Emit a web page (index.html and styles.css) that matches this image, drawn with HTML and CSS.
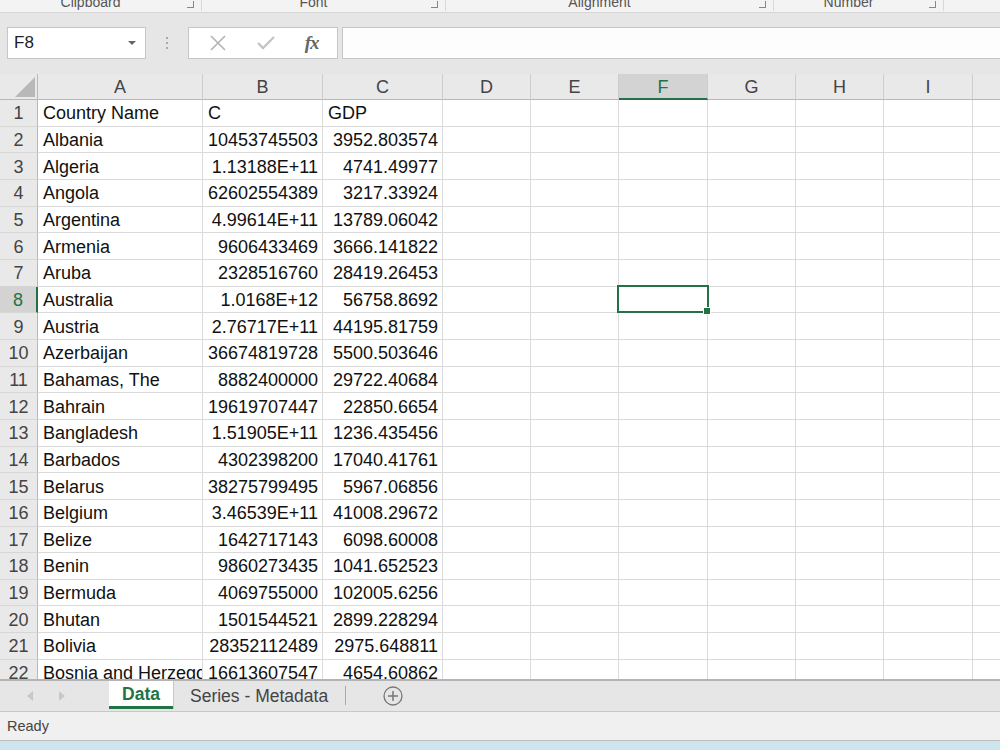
FILE: index.html
```html
<!DOCTYPE html>
<html lang="en">
  <head>
    <meta charset="UTF-8" />
    <title>Book1 - Excel</title>
    <link rel="stylesheet" href="styles.css">
  </head>
  <body>
    <div class="app">
      <!-- ribbon group labels (cut off at top) -->
      <div class="ribbon">
        <div class="group g-clip"><span class="label">Clipboard</span><span class="launch"></span></div>
        <div class="group g-font"><span class="label">Font</span><span class="launch"></span></div>
        <div class="group g-align"><span class="label">Alignment</span><span class="launch"></span></div>
        <div class="group g-num"><span class="label">Number</span><span class="launch"></span></div>
        <div class="group g-rest"></div>
      </div>

      <!-- formula bar -->
      <div class="formulabar">
        <div class="namebox">
          <span>F8</span>
          <svg width="8" height="5" viewBox="0 0 8 5"><path d="M0 0h8L4 4z" fill="#666"/></svg>
        </div>
        <div class="grip">
          <i></i><i></i><i></i>
        </div>
        <div class="fxbtns">
          <svg width="18" height="18" viewBox="0 0 18 18"><path d="M2 2l14 14M16 2L2 16" stroke="#b4b4b4" stroke-width="1.6" fill="none"/></svg>
          <svg width="20" height="18" viewBox="0 0 20 18"><path d="M2 9l5 5L18 3" stroke="#c4c4c4" stroke-width="2.4" fill="none"/></svg>
          <span class="fx">fx</span>
        </div>
        <div class="input"></div>
      </div>

      <!-- sheet grid -->
      <div class="sheet" id="sheet"></div>

      <!-- sheet tabs -->
      <div class="tabs">
        <div class="nav">
          <svg width="8" height="10" viewBox="0 0 8 10"><path d="M6 0v10L0 5z" fill="#c8c8c8"/></svg>
          <svg width="8" height="10" viewBox="0 0 8 10"><path d="M2 0v10l6-5z" fill="#c8c8c8"/></svg>
        </div>
        <div class="tab active">Data</div>
        <div class="tab">Series - Metadata</div>
        <div class="tabsep"></div>
        <div class="addsheet">
          <svg width="20" height="20" viewBox="0 0 20 20"><circle cx="10" cy="10" r="9" stroke="#777" stroke-width="1.3" fill="none"/><path d="M10 5v10M5 10h10" stroke="#777" stroke-width="1.5"/></svg>
        </div>
      </div>

      <div class="status">Ready</div>
      <div class="taskbar"></div>
    </div>

    <script>
      const kolonner = ["A", "B", "C", "D", "E", "F", "G", "H", "I", "J"];
      const data = [
        ["Country Name", "C", "GDP"],
        ["Albania", "10453745503", "3952.803574"],
        ["Algeria", "1.13188E+11", "4741.49977"],
        ["Angola", "62602554389", "3217.33924"],
        ["Argentina", "4.99614E+11", "13789.06042"],
        ["Armenia", "9606433469", "3666.141822"],
        ["Aruba", "2328516760", "28419.26453"],
        ["Australia", "1.0168E+12", "56758.8692"],
        ["Austria", "2.76717E+11", "44195.81759"],
        ["Azerbaijan", "36674819728", "5500.503646"],
        ["Bahamas, The", "8882400000", "29722.40684"],
        ["Bahrain", "19619707447", "22850.6654"],
        ["Bangladesh", "1.51905E+11", "1236.435456"],
        ["Barbados", "4302398200", "17040.41761"],
        ["Belarus", "38275799495", "5967.06856"],
        ["Belgium", "3.46539E+11", "41008.29672"],
        ["Belize", "1642717143", "6098.60008"],
        ["Benin", "9860273435", "1041.652523"],
        ["Bermuda", "4069755000", "102005.6256"],
        ["Bhutan", "1501544521", "2899.228294"],
        ["Bolivia", "28352112489", "2975.648811"],
        ["Bosnia and Herzegovina", "16613607547", "4654.60862"],
        ["", "", ""],
      ];

      const sheet = document.querySelector("#sheet");

      // header row
      const hjoerne = document.createElement("div");
      hjoerne.className = "hd corner";
      hjoerne.innerHTML =
        '<svg width="20" height="20" viewBox="0 0 20 20"><path d="M20 0v20H0z" fill="#b8b8b8"/></svg>';
      sheet.appendChild(hjoerne);
      kolonner.forEach((k) => {
        const h = document.createElement("div");
        h.className = "hd col" + (k == "F" ? " sel" : "");
        h.textContent = k;
        sheet.appendChild(h);
      });

      // rows
      data.forEach((raekke, i) => {
        const nr = i + 1;
        const rh = document.createElement("div");
        rh.className = "hd row" + (nr == 8 ? " sel" : "");
        rh.textContent = nr;
        sheet.appendChild(rh);
        kolonner.forEach((k, j) => {
          const c = document.createElement("div");
          c.className = "cell";
          const v = raekke[j] || "";
          if (v != "" && nr > 1 && j > 0) c.classList.add("num");
          if (k == "F" && nr == 8) c.classList.add("active");
          c.textContent = v;
          sheet.appendChild(c);
        });
      });
    </script>
  </body>
</html>
```

FILE: styles.css
```css
* {
  margin: 0;
  padding: 0;
  box-sizing: border-box;
}

body {
  width: 1000px;
  height: 750px;
  overflow: hidden;
  background: #e6e6e6;
  font-family: "Liberation Sans", Arial, sans-serif;
}

.app {
  display: flex;
  flex-direction: column;
  height: 750px;
}

/* ribbon labels */

.ribbon {
  display: flex;
  height: 13px;
  background: #f3f3f3;
  border-bottom: 1px solid #d6d6d6;
  overflow: hidden;
}

.group {
  display: flex;
  justify-content: center;
  align-items: flex-start;
  border-right: 1px solid #d8d8d8;
  height: 11px;
  padding-right: 20px;
  position: relative;
}

.g-clip { width: 202px; }
.g-font { width: 244px; }
.g-align { width: 328px; }
.g-num { width: 170px; }
.g-rest { flex: 1; border-right: none; }

.label {
  font-size: 14px;
  color: #555;
  margin-top: -7px;
  line-height: 18px;
}

.launch {
  position: absolute;
  right: 7px;
  top: 1px;
  width: 7px;
  height: 7px;
  border-right: 1px solid #888;
  border-bottom: 1px solid #888;
}

/* formula bar */

.formulabar {
  display: flex;
  align-items: center;
  height: 61px;
  padding: 14px 0 15px 7px;
}

.namebox {
  width: 139px;
  height: 32px;
  background: #fff;
  border: 1px solid #c6c6c6;
  display: flex;
  align-items: center;
  justify-content: space-between;
  padding: 0 9px 0 6px;
  font-size: 17px;
  color: #222;
}

.grip {
  width: 42px;
  display: flex;
  flex-direction: column;
  align-items: center;
  gap: 3px;
}

.grip i {
  display: block;
  width: 2px;
  height: 2px;
  background: #aaa;
}

.fxbtns {
  width: 150px;
  height: 32px;
  background: #fff;
  border: 1px solid #c6c6c6;
  display: flex;
  align-items: center;
  justify-content: space-around;
  padding: 0 4px 0 6px;
}

.fx {
  font-family: "Liberation Serif", serif;
  font-style: italic;
  font-weight: bold;
  font-size: 19px;
  color: #666;
  letter-spacing: -1px;
}

.input {
  flex: 1;
  height: 32px;
  margin-left: 4px;
  background: #fdfdfd;
  border: 1px solid #c6c6c6;
  border-right: none;
}

/* sheet */

.sheet {
  height: 605px;
  overflow: hidden;
  background: #fff;
  display: grid;
  grid-template-columns: 38px 165px 120px 120px 88px 88px 89px 88px 88px 89px 88px;
  grid-template-rows: 26px;
  grid-auto-rows: 26.67px;
  font-size: 18px;
  color: #111;
}

.hd {
  background: #e9e9e9;
  color: #444;
  display: flex;
  align-items: center;
  justify-content: center;
  padding-top: 2px;
  border-right: 1px solid #cdcdcd;
  border-bottom: 1px solid #cdcdcd;
}

.hd.col {
  border-bottom: 1px solid #b8b8b8;
}

.hd.row {
  border-right: 1px solid #b8b8b8;
  border-bottom: 1px solid #d6d6d6;
}

.corner {
  align-items: flex-end;
  justify-content: flex-end;
  padding: 0 2px 2px 0;
  border-bottom: 1px solid #b8b8b8;
  border-right: 1px solid #b8b8b8;
}

.hd.sel {
  background: #d3d3d3;
  color: #217346;
}

.hd.col.sel {
  border-bottom: 2px solid #217346;
}

.hd.row.sel {
  border-right: 2px solid #217346;
}

.cell {
  border-right: 1px solid #dadada;
  border-bottom: 1px solid #dadada;
  padding: 2px 4px 0 5px;
  white-space: nowrap;
  overflow: hidden;
  display: flex;
  align-items: center;
}

.cell.num {
  justify-content: flex-end;
}

.cell.active {
  position: relative;
  overflow: visible;
}

.cell.active::before {
  content: "";
  position: absolute;
  left: -2px;
  top: -2px;
  right: -2px;
  bottom: -1px;
  border: 2px solid #217346;
}

.cell.active::after {
  content: "";
  position: absolute;
  right: -4px;
  bottom: -3px;
  width: 6px;
  height: 6px;
  background: #217346;
  border: 1px solid #fff;
}

/* tabs */

.tabs {
  height: 32px;
  border-top: 2px solid #b4b4b4;
  background: #e6e6e6;
  display: flex;
  align-items: stretch;
}

.nav {
  width: 109px;
  display: flex;
  align-items: center;
  gap: 22px;
  padding-left: 27px;
}

.tab {
  display: flex;
  align-items: center;
  padding: 0 10px;
  font-size: 17.5px;
  color: #444;
}

.tab.active {
  width: 64px;
  justify-content: center;
  background: #fff;
  color: #217346;
  font-weight: bold;
  border-bottom: 3px solid #217346;
  margin-bottom: 2px;
  padding-top: 1px;
  box-shadow: 1px 0 0 #c8c8c8;
}

.tab + .tab {
  padding-left: 17px;
  padding-right: 17px;
}

.tabsep {
  width: 1px;
  background: #aaa;
  margin: 5px 0 6px;
}

.addsheet {
  display: flex;
  align-items: center;
  padding-left: 37px;
}

.status {
  height: 30px;
  background: #f0f0f0;
  border-top: 1px solid #c8c8c8;
  border-bottom: 1px solid #bdbdbd;
  font-size: 14.5px;
  color: #444;
  padding-left: 7px;
  display: flex;
  align-items: center;
}

.taskbar {
  flex: 1;
  background: #cde6ee;
}
```
